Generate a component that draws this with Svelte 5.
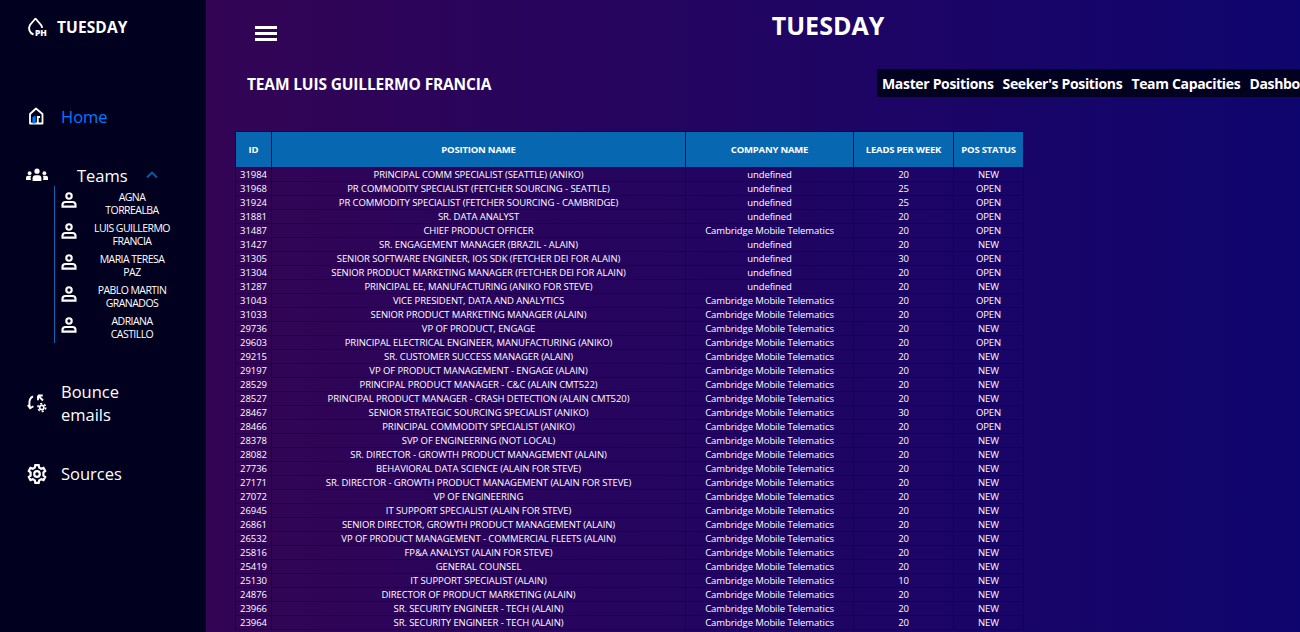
<script>
	const team = [
		['AGNA', 'TORREALBA'],
		['LUIS GUILLERMO', 'FRANCIA'],
		['MARIA TERESA', 'PAZ'],
		['PABLO MARTIN', 'GRANADOS'],
		['ADRIANA', 'CASTILLO']
	];
	const tabs = ['Master Positions', "Seeker's Positions", 'Team Capacities', 'Dashboard'];
	const cmt = 'Cambridge Mobile Telematics';
	const rows = [
		[31984, 'PRINCIPAL COMM SPECIALIST (SEATTLE) (ANIKO)', 'undefined', 20, 'NEW'],
		[31968, 'PR COMMODITY SPECIALIST (FETCHER SOURCING - SEATTLE)', 'undefined', 25, 'OPEN'],
		[31924, 'PR COMMODITY SPECIALIST (FETCHER SOURCING - CAMBRIDGE)', 'undefined', 25, 'OPEN'],
		[31881, 'SR. DATA ANALYST', 'undefined', 20, 'OPEN'],
		[31487, 'CHIEF PRODUCT OFFICER', cmt, 20, 'OPEN'],
		[31427, 'SR. ENGAGEMENT MANAGER (BRAZIL - ALAIN)', 'undefined', 20, 'NEW'],
		[31305, 'SENIOR SOFTWARE ENGINEER, IOS SDK (FETCHER DEI FOR ALAIN)', 'undefined', 30, 'OPEN'],
		[31304, 'SENIOR PRODUCT MARKETING MANAGER (FETCHER DEI FOR ALAIN)', 'undefined', 20, 'OPEN'],
		[31287, 'PRINCIPAL EE, MANUFACTURING (ANIKO FOR STEVE)', 'undefined', 20, 'NEW'],
		[31043, 'VICE PRESIDENT, DATA AND ANALYTICS', cmt, 20, 'OPEN'],
		[31033, 'SENIOR PRODUCT MARKETING MANAGER (ALAIN)', cmt, 20, 'OPEN'],
		[29736, 'VP OF PRODUCT, ENGAGE', cmt, 20, 'NEW'],
		[29603, 'PRINCIPAL ELECTRICAL ENGINEER, MANUFACTURING (ANIKO)', cmt, 20, 'OPEN'],
		[29215, 'SR. CUSTOMER SUCCESS MANAGER (ALAIN)', cmt, 20, 'NEW'],
		[29197, 'VP OF PRODUCT MANAGEMENT - ENGAGE (ALAIN)', cmt, 20, 'NEW'],
		[28529, 'PRINCIPAL PRODUCT MANAGER - C&C (ALAIN CMT522)', cmt, 20, 'NEW'],
		[28527, 'PRINCIPAL PRODUCT MANAGER - CRASH DETECTION (ALAIN CMT520)', cmt, 20, 'NEW'],
		[28467, 'SENIOR STRATEGIC SOURCING SPECIALIST (ANIKO)', cmt, 30, 'OPEN'],
		[28466, 'PRINCIPAL COMMODITY SPECIALIST (ANIKO)', cmt, 20, 'OPEN'],
		[28378, 'SVP OF ENGINEERING (NOT LOCAL)', cmt, 20, 'NEW'],
		[28082, 'SR. DIRECTOR - GROWTH PRODUCT MANAGEMENT (ALAIN)', cmt, 20, 'NEW'],
		[27736, 'BEHAVIORAL DATA SCIENCE (ALAIN FOR STEVE)', cmt, 20, 'NEW'],
		[27171, 'SR. DIRECTOR - GROWTH PRODUCT MANAGEMENT (ALAIN FOR STEVE)', cmt, 20, 'NEW'],
		[27072, 'VP OF ENGINEERING', cmt, 20, 'NEW'],
		[26945, 'IT SUPPORT SPECIALIST (ALAIN FOR STEVE)', cmt, 20, 'NEW'],
		[26861, 'SENIOR DIRECTOR, GROWTH PRODUCT MANAGEMENT (ALAIN)', cmt, 20, 'NEW'],
		[26532, 'VP OF PRODUCT MANAGEMENT - COMMERCIAL FLEETS (ALAIN)', cmt, 20, 'NEW'],
		[25816, 'FP&A ANALYST (ALAIN FOR STEVE)', cmt, 20, 'NEW'],
		[25419, 'GENERAL COUNSEL', cmt, 20, 'NEW'],
		[25130, 'IT SUPPORT SPECIALIST (ALAIN)', cmt, 10, 'NEW'],
		[24876, 'DIRECTOR OF PRODUCT MARKETING (ALAIN)', cmt, 20, 'NEW'],
		[23966, 'SR. SECURITY ENGINEER - TECH (ALAIN)', cmt, 20, 'NEW'],
		[23964, 'SR. SECURITY ENGINEER - TECH (ALAIN)', cmt, 20, 'NEW']
	];
</script>

<div class="layout">
	<aside class="sidebar">
		<div class="brand">
			<span class="logo">
				<svg width="20" height="20" viewBox="0 0 20 20" fill="none" stroke="#fff" stroke-width="1.9">
					<path d="M8.5 1.5 L3 8 A6.6 6.6 0 0 0 6.5 17.5 M8.5 1.5 L14 8 A6.5 6.5 0 0 1 15.2 10.8" />
				</svg>
				<span class="ph">PH</span>
			</span>
			<span class="brand-name">TUESDAY</span>
		</div>

		<a class="nav home" href="#home">
			<svg width="18" height="18" viewBox="0 0 18 18" fill="none" stroke="#fff" stroke-width="1.8">
				<path d="M3 7 L9 1.5 L15.5 7 V16.5 H3 Z" stroke-linejoin="round" />
				<path d="M6 16 V10.5 L8 9.5 V16 Z" fill="#007bff" stroke="#007bff" stroke-width="1.2" />
				<path d="M10.8 16 V10 H13" />
			</svg>
			<span>Home</span>
		</a>

		<div class="teams">
			<svg width="22" height="14" viewBox="0 0 22 14" fill="#fff">
				<circle cx="11" cy="3.2" r="2.6" />
				<circle cx="3.6" cy="5.2" r="1.9" />
				<circle cx="18.4" cy="5.2" r="1.9" />
				<path d="M6.6 13 V10.2 A3 3 0 0 1 9.6 7.2 H12.4 A3 3 0 0 1 15.4 10.2 V13 Z" />
				<path d="M0 12 V9.8 A2 2 0 0 1 2 7.8 H5.2 A4.5 4.5 0 0 0 5 12 Z" />
				<path d="M22 12 V9.8 A2 2 0 0 0 20 7.8 H16.8 A4.5 4.5 0 0 1 17 12 Z" />
			</svg>
			<span class="teams-label">Teams</span>
			<svg class="chevron" width="12" height="8" viewBox="0 0 12 8" fill="none" stroke="#0a5aa5" stroke-width="1.8">
				<path d="M1 6.5 L6 1.5 L11 6.5" />
			</svg>
		</div>
		<ul class="members">
			{#each team as name}
				<li>
					<svg width="16" height="16" viewBox="0 0 16 16" fill="none" stroke="#fff" stroke-width="2.1">
						<circle cx="8" cy="4" r="2.7" />
						<path d="M1.5 14.6 V12.6 A2.8 2.8 0 0 1 4.3 10 H11.7 A2.8 2.8 0 0 1 14.5 12.6 V14.6 Z" />
					</svg>
					<span>{name[0]}<br />{name[1]}</span>
				</li>
			{/each}
		</ul>

		<a class="nav bounce" href="#bounce">
			<svg width="20" height="20" viewBox="0 0 20 20" fill="none" stroke="#fff" stroke-width="1.9">
				<path d="M6 3.5 C2.4 5 1.6 8.5 3 14.5" />
				<path d="M0.8 12 L3.1 15.2 L6.4 13.2" />
				<path d="M11 2.5 H15.8 M11 2.5 V7.3 M11 2.5 L16 7.5" />
				<circle cx="14.8" cy="14.5" r="2.1" stroke-width="1.7" />
				<circle cx="14.8" cy="14.5" r="3.9" stroke-width="1.6" stroke-dasharray="2 2.08" />
			</svg>
			<span>Bounce<br />emails</span>
		</a>

		<a class="nav sources" href="#sources">
			<svg width="20" height="20" viewBox="0 0 20 20" fill="none" stroke="#fff" stroke-width="2.2">
				<path d="M8.3 1.2 H11.7 L12.2 3.6 L14.2 4.7 L16.5 3.9 L18.2 6.9 L16.4 8.5 V11.5 L18.2 13.1 L16.5 16.1 L14.2 15.3 L12.2 16.4 L11.7 18.8 H8.3 L7.8 16.4 L5.8 15.3 L3.5 16.1 L1.8 13.1 L3.6 11.5 V8.5 L1.8 6.9 L3.5 3.9 L5.8 4.7 L7.8 3.6 Z" />
				<circle cx="10" cy="10" r="2.8" />
			</svg>
			<span>Sources</span>
		</a>
	</aside>

	<main class="content">
		<header class="topbar">
			<div class="burger-wrap">
				<button class="burger" aria-label="menu"><i></i><i></i><i></i></button>
			</div>
			<h1>TUESDAY</h1>
		</header>

		<div class="team-row">
			<h2>TEAM LUIS GUILLERMO FRANCIA</h2>
			<nav class="tabs">
				{#each tabs as tab}
					<span>{tab}</span>
				{/each}
			</nav>
		</div>

		<table>
			<colgroup>
				<col style="width:36px" />
				<col style="width:414px" />
				<col style="width:168px" />
				<col style="width:100px" />
				<col style="width:70px" />
			</colgroup>
			<thead>
				<tr>
					<th>ID</th>
					<th>POSITION NAME</th>
					<th>COMPANY NAME</th>
					<th>LEADS PER WEEK</th>
					<th>POS STATUS</th>
				</tr>
			</thead>
			<tbody>
				{#each rows as row}
					<tr>
						{#each row as cell}
							<td>{cell}</td>
						{/each}
					</tr>
				{/each}
			</tbody>
		</table>
	</main>
</div>

<style>
	:global(body) {
		overflow: hidden;
		font-family: 'Open Sans', 'Noto Sans', sans-serif;
	}

	.layout {
		display: flex;
		width: 1300px;
		height: 632px;
		overflow: hidden;
		color: #fff;
		background: linear-gradient(to right, #3a0450, #0f056e);
	}

	.sidebar {
		flex: 0 0 206px;
		background: #02001f;
		box-sizing: border-box;
		padding: 17px 0 0 27px;
	}

	.brand {
		display: flex;
		align-items: center;
		gap: 9px;
		height: 20px;
		margin-bottom: 66px;
	}

	.logo {
		position: relative;
		display: block;
		width: 21px;
		height: 20px;
	}

	.ph {
		position: absolute;
		left: 8px;
		top: 11px;
		font-size: 8.5px;
		line-height: 9px;
		font-weight: 800;
		letter-spacing: -0.2px;
	}

	.brand-name {
		font-size: 15.5px;
		font-weight: 700;
		letter-spacing: 0.1px;
	}

	.nav {
		display: flex;
		align-items: center;
		gap: 16px;
		color: #fff;
		text-decoration: none;
		font-size: 16.5px;
		line-height: 23px;
	}

	.home {
		color: #007bff;
		height: 26px;
		margin-bottom: 38px;
	}

	.teams {
		display: flex;
		align-items: center;
		height: 16px;
		margin-left: -1px;
		margin-bottom: 3px;
	}

	.teams-label {
		font-size: 16.5px;
		margin-left: 29px;
		width: 69px;
	}

	.members {
		list-style: none;
		margin: 0 0 37px 27px;
		padding: 2px 0 0 0;
		border-left: 1px solid #0a67b0;
		height: 155px;
		width: 130px;
	}

	.members li {
		display: flex;
		align-items: center;
		height: 31.2px;
		padding-left: 6px;
		font-size: 10.5px;
		line-height: 13px;
		letter-spacing: -0.55px;
	}

	.members svg {
		margin-bottom: 7px;
	}

	.members span {
		flex: 1;
		text-align: center;
		padding-left: 2px;
		white-space: nowrap;
	}

	.bounce {
		margin-bottom: 36px;
		gap: 14px;
	}

	.sources {
		gap: 14px;
	}

	.content {
		flex: 1;
		min-width: 0;
		overflow: hidden;
	}

	.topbar {
		display: flex;
		height: 69px;
	}

	.burger-wrap {
		flex: 0 0 150px;
		padding: 26px 0 0 49px;
		box-sizing: border-box;
	}

	.burger {
		display: flex;
		flex-direction: column;
		gap: 3.5px;
		background: none;
		border: 0;
		padding: 0;
		width: 22px;
	}

	.burger i {
		display: block;
		height: 2.5px;
		width: 22px;
		background: #fff;
	}

	h1 {
		flex: 1;
		margin: 7px 0 0;
		text-align: center;
		font-size: 25px;
		line-height: 36px;
		font-weight: 700;
	}

	.team-row {
		display: flex;
		align-items: center;
		height: 28px;
		margin-bottom: 34px;
	}

	h2 {
		flex: 0 0 630px;
		margin: 1px 0 0;
		padding-left: 41px;
		box-sizing: border-box;
		font-size: 15.5px;
		font-weight: 700;
		white-space: nowrap;
		letter-spacing: -0.15px;
	}

	.tabs {
		display: flex;
		flex: none;
		gap: 9px;
		margin-left: 41px;
		padding: 0 5px;
		height: 28px;
		align-items: center;
		background: #02001f;
		font-size: 14px;
		font-weight: 700;
		white-space: nowrap;
		letter-spacing: -0.33px;
	}

	table {
		table-layout: fixed;
		width: 788px;
		margin-left: 29px;
		border-collapse: collapse;
		border: 1px solid #0a0a30;
		font-size: 9.5px;
		letter-spacing: -0.08px;
	}

	th {
		height: 35px;
		padding: 0;
		background: #0867b1;
		border: 1px solid #04123f;
		font-weight: 700;
		text-align: center;
		white-space: nowrap;
		letter-spacing: -0.2px;
	}

	td {
		height: 13px;
		padding: 0;
		border: 1px solid #0c0838;
		text-align: center;
		line-height: 13px;
		white-space: nowrap;
		overflow: hidden;
	}
</style>
